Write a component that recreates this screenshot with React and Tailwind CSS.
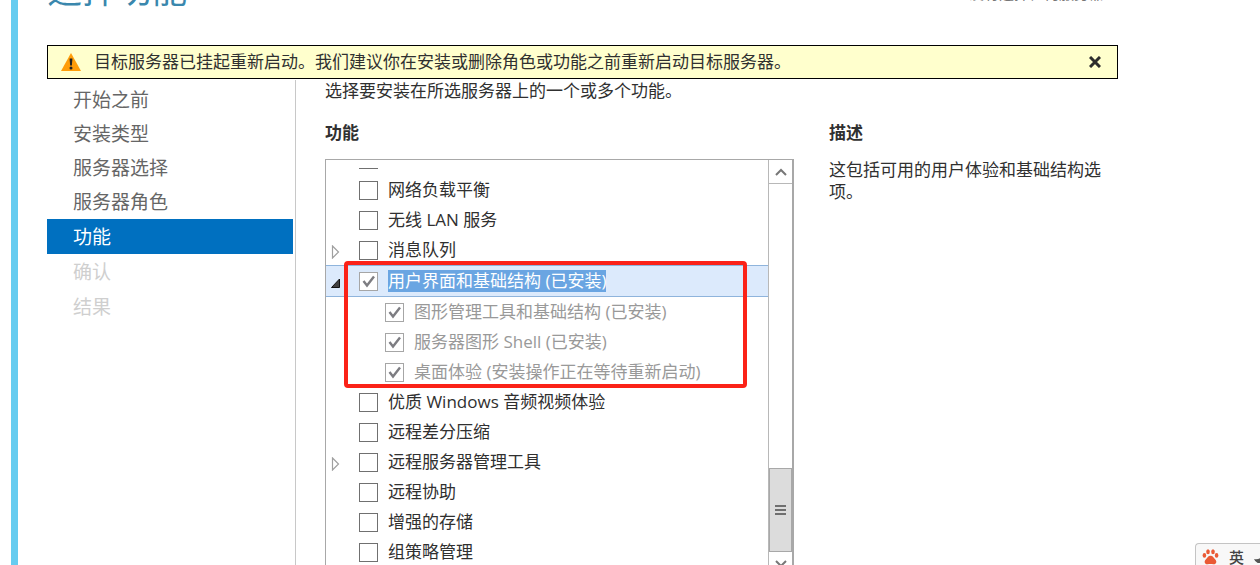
import React, { useState } from 'react';

const steps = [
  { label: '开始之前' },
  { label: '安装类型' },
  { label: '服务器选择' },
  { label: '服务器角色' },
  { label: '功能', active: true },
  { label: '确认', disabled: true },
  { label: '结果', disabled: true },
];

const featuresBefore = [
  { id: 'nlb', label: '网络负载平衡' },
  { id: 'wlan', label: '无线 LAN 服务' },
  { id: 'msmq', label: '消息队列', expandable: true },
];

const installedChildren = [
  { id: 'gui-mgmt', label: '图形管理工具和基础结构 (已安装)' },
  { id: 'gui-shell', label: '服务器图形 Shell (已安装)' },
  { id: 'desktop-exp', label: '桌面体验 (安装操作正在等待重新启动)' },
];

const featuresAfter = [
  { id: 'qwave', label: '优质 Windows 音频视频体验' },
  { id: 'rdc', label: '远程差分压缩' },
  { id: 'rsat', label: '远程服务器管理工具', expandable: true },
  { id: 'remote-assist', label: '远程协助' },
  { id: 'enhanced-storage', label: '增强的存储' },
  { id: 'gpmc', label: '组策略管理' },
];

const CheckBox = ({ id, checked, disabled, onChange }) => (
  <span className="relative block w-[19px] h-[19px] shrink-0">
    <input
      id={id}
      type="checkbox"
      checked={checked}
      disabled={disabled}
      onChange={onChange}
      className={
        disabled
          ? 'block w-full h-full appearance-none border border-[#a6a6a6] bg-white'
          : 'block w-full h-full appearance-none border border-[#707070] bg-white'
      }
    />
    {checked && (
      <svg viewBox="0 0 19 19" className="absolute inset-0 pointer-events-none" fill="none" stroke="#7d7d82" strokeWidth="2.4">
        <path d="M4.5 9 L8 13.5 L15 4.5" />
      </svg>
    )}
  </span>
);

const Expander = ({ open }) => (
  <button type="button" aria-label={open ? '折叠' : '展开'} className="w-[33px] h-full shrink-0 pl-[5px] pt-1">
    {open ? (
      <svg width="10" height="14" viewBox="0 0 10 14">
        <path d="M8.5 3 V11.5 H0.5 Z" fill="#404040" stroke="#111" />
      </svg>
    ) : (
      <svg width="10" height="14" viewBox="0 0 10 14">
        <path d="M1.5 1 L7.5 7 L1.5 13 Z" fill="#fff" stroke="#a0a0a0" strokeWidth="1.2" />
      </svg>
    )}
  </button>
);

const FeatureRow = ({ feature, checked, onToggle }) => (
  <li className="flex items-center h-[30px]">
    {feature.expandable ? <Expander /> : <span className="w-[33px] shrink-0" />}
    <CheckBox id={feature.id} checked={checked} onChange={() => onToggle(feature.id)} />
    <label htmlFor={feature.id} className="pl-[10px] whitespace-nowrap">{feature.label}</label>
  </li>
);

const App = () => {
  const [selected, setSelected] = useState({});
  const [showNotice, setShowNotice] = useState(true);

  const toggle = (id) => setSelected((prev) => ({ ...prev, [id]: !prev[id] }));

  return (
    <div className="relative h-screen overflow-hidden bg-white pl-[11px] font-['Open_Sans','Noto_Sans_CJK_SC',sans-serif] text-[17px] leading-[22px] text-[#303030]">
      <div className="h-full border-l-[7px] border-[#66ccf0] pl-[29px] pr-[142px]">
        {/* Header */}
        <header className="flex justify-between items-end h-[45px] pb-[35px]">
          <h1 className="text-[35px] leading-[40px] text-[#3a87ad]">选择功能</h1>
          <p className="pr-[14px] pb-[7px] text-[15px] leading-5 text-[#777]">没有选择任何服务器</p>
        </header>

        {/* Restart notice */}
        <div className="h-[35px]">
          {showNotice && (
            <div role="alert" className="flex items-center h-[34px] border border-black bg-[#ffffcd] pl-3 pr-4">
              <svg width="22" height="20" viewBox="0 0 22 20" className="shrink-0">
                <path d="M11 1 L21 19 H1 Z" fill="#ff9d0a" />
                <path d="M9.6 6.5 h2.8 l-0.5 7 h-1.8 z" fill="#222" />
                <circle cx="11" cy="16" r="1.5" fill="#222" />
              </svg>
              <p className="flex-1 pl-3">目标服务器已挂起重新启动。我们建议你在安装或删除角色或功能之前重新启动目标服务器。</p>
              <button type="button" aria-label="关闭" onClick={() => setShowNotice(false)}>
                <svg width="12" height="12" viewBox="0 0 12 12" stroke="#2d2d2d" strokeWidth="3">
                  <path d="M1 1 L11 11 M11 1 L1 11" />
                </svg>
              </button>
            </div>
          )}
        </div>

        <div className="flex h-[600px]">
          {/* Wizard steps */}
          <nav className="w-[249px] shrink-0 border-r border-[#c8c8c8] pt-[3px] pr-[2px]">
            {steps.map((step) => (
              <button
                key={step.label}
                type="button"
                disabled={step.disabled}
                className={
                  step.active
                    ? 'flex items-center w-full h-[35px] pl-[26px] text-[19px] bg-[#0070c0] text-white'
                    : step.disabled
                      ? 'flex items-center w-full h-[35px] pl-[26px] text-[19px] text-[#cfcfcf]'
                      : 'flex items-center w-full h-[34px] pl-[26px] text-[19px] text-[#666]'
                }
              >
                {step.label}
              </button>
            ))}
          </nav>

          <main className="flex-1 min-w-0 pl-[29px]">
            <p>选择要安装在所选服务器上的一个或多个功能。</p>
            <div className="flex gap-[35px] pt-5">
              <section className="w-[469px] shrink-0">
                <h2 className="font-bold">功能</h2>
                <div className="flex h-[460px] mt-[15px] border border-[#a8a8a8] border-r-2">
                  <ul className="flex-1 min-w-0 mt-[7px] overflow-hidden">
                    {/* bottom edge of the row scrolled out above */}
                    <li className="flex h-[8px] pl-[33px]">
                      <span className="w-[19px] h-[2px] border-b border-[#707070]" />
                    </li>
                    {featuresBefore.map((f) => (
                      <FeatureRow key={f.id} feature={f} checked={!!selected[f.id]} onToggle={toggle} />
                    ))}
                    <li className="relative">
                      <div className="flex items-center h-[32px] border-y border-[#8fb4dc] bg-[#dceafc]">
                        <Expander open />
                        <CheckBox id="gui" checked disabled />
                        <label htmlFor="gui" className="ml-[10px] whitespace-nowrap bg-[#6aa5e2] text-white">
                          用户界面和基础结构 (已安装)
                        </label>
                      </div>
                      <ul>
                        {installedChildren.map((f) => (
                          <li key={f.id} className="flex items-center h-[30px] pl-[59px]">
                            <CheckBox id={f.id} checked disabled />
                            <label htmlFor={f.id} className="pl-[10px] whitespace-nowrap text-[#999]">{f.label}</label>
                          </li>
                        ))}
                      </ul>
                      <div className="absolute -top-1 left-[18px] w-[403px] h-[127px] border-4 border-[#fb2218] rounded pointer-events-none" />
                    </li>
                    {featuresAfter.map((f) => (
                      <FeatureRow key={f.id} feature={f} checked={!!selected[f.id]} onToggle={toggle} />
                    ))}
                  </ul>

                  {/* Scroll bar */}
                  <div className="flex flex-col w-[24px] shrink-0 border-l border-[#b8b8b8]">
                    <button type="button" aria-label="向上滚动" className="flex items-center justify-center h-6 border-b border-[#b8b8b8]">
                      <svg width="12" height="8" viewBox="0 0 12 8" fill="none" stroke="#777" strokeWidth="2">
                        <path d="M1 7 L6 2 L11 7" />
                      </svg>
                    </button>
                    <div className="h-[284px]" />
                    <div className="flex flex-col items-center justify-center gap-[2px] h-[84px] border border-[#a8a8a8] bg-[#dcdcdc]">
                      <span className="w-[11px] h-[2px] bg-[#6f6f6f]" />
                      <span className="w-[11px] h-[2px] bg-[#6f6f6f]" />
                      <span className="w-[11px] h-[2px] bg-[#6f6f6f]" />
                    </div>
                    <button type="button" aria-label="向下滚动" className="flex items-center justify-center h-6">
                      <svg width="12" height="8" viewBox="0 0 12 8" fill="none" stroke="#777" strokeWidth="2">
                        <path d="M1 1 L6 6 L11 1" />
                      </svg>
                    </button>
                  </div>
                </div>
              </section>

              <section className="flex-1 min-w-0 pr-2">
                <h2 className="font-bold">描述</h2>
                <p className="pt-[15px]">这包括可用的用户体验和基础结构选项。</p>
              </section>
            </div>
          </main>
        </div>
      </div>

      {/* Input method bar */}
      <div className="absolute right-0 bottom-0 flex items-center gap-[10px] w-[65px] h-[22px] overflow-hidden border-t border-l border-[#c4c4c4] rounded-tl bg-[#f8f8f8] pl-[6px] pt-1 text-[15px] font-medium text-[#444]">
        <svg width="17" height="16" viewBox="0 0 17 16" fill="#ea5a35" className="shrink-0">
          <ellipse cx="2.4" cy="6.4" rx="1.8" ry="2.3" />
          <ellipse cx="6" cy="2.8" rx="1.8" ry="2.5" />
          <ellipse cx="11" cy="2.8" rx="1.8" ry="2.5" />
          <ellipse cx="14.6" cy="6.4" rx="1.8" ry="2.3" />
          <path d="M8.5 6.8 C6 6.8 5.5 9 4 10.2 C1.5 12.3 2.8 15.5 5.6 15.2 C7.5 14.9 9.5 14.9 11.4 15.2 C14.2 15.5 15.5 12.3 13 10.2 C11.5 9 11 6.8 8.5 6.8 Z" />
        </svg>
        <span>英</span>
        <svg width="12" height="12" viewBox="0 0 12 12" fill="#555" className="shrink-0">
          <path d="M10 1 A8 8 0 0 1 0 8 A7 7 0 0 0 12 10 Z" />
        </svg>
      </div>
    </div>
  );
};

export default App;
